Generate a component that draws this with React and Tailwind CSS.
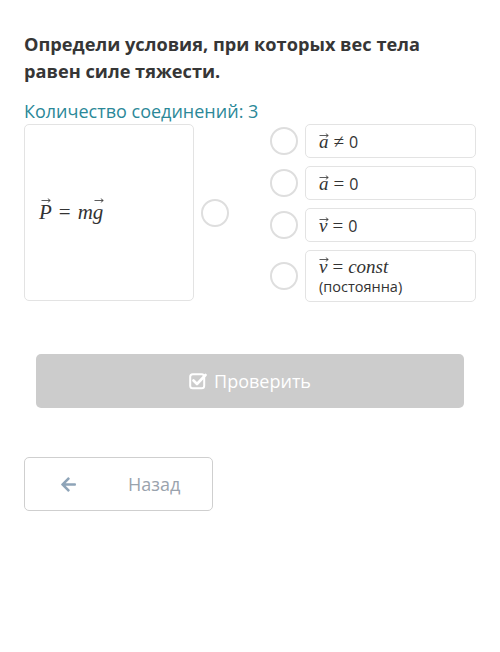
import { FaArrowLeft } from 'react-icons/fa'

const serif = "font-['Liberation_Serif','DejaVu_Serif',serif]"

function Vec({ children }) {
  return (
    <span className="relative inline-block italic">
      {children}
      <svg
        className="absolute left-[55%] -translate-x-1/2 top-[1px]"
        width="10"
        height="5"
        viewBox="0 0 10 5"
      >
        <path d="M0.5 2.5H9M6.8 0.6L9.3 2.5L6.8 4.4" stroke="#333" strokeWidth="0.8" fill="none" />
      </svg>
    </span>
  )
}

function Radio() {
  return <span className="block w-[28px] h-[28px] rounded-full border-2 border-[#dedede] bg-white shrink-0" />
}

function Option({ children, tall }) {
  return (
    <div className="flex items-center">
      <div className="w-[35px] flex justify-start">
        <Radio />
      </div>
      <div
        className={`w-[171px] ${tall ? 'h-[52px]' : 'h-[34px]'} border border-[#e3e3e3] rounded-[5px] pl-[13px] flex flex-col justify-center text-[#333]`}
      >
        {children}
      </div>
    </div>
  )
}

function CheckIcon() {
  return (
    <svg width="18" height="18" viewBox="0 0 18 18" fill="none">
      <rect x="1.2" y="2.2" width="14" height="14" rx="2.5" stroke="white" strokeWidth="2" />
      <path d="M4.5 8.5L8 12L16.5 3" stroke="white" strokeWidth="2.6" strokeLinecap="round" strokeLinejoin="round" />
    </svg>
  )
}

export default function App() {
  return (
    <div className="w-[500px] h-[652px] bg-white font-['Open_Sans',sans-serif] px-[24px] pt-[31px]">
      <h1 className="text-[18.2px] leading-[27px] font-bold text-[#363636]">
        Определи условия, при которых вес тела равен силе тяжести.
      </h1>

      <p className="mt-[13px] text-[18px] leading-[26px] text-[#2b8898]">Количество соединений: 3</p>

      <div className="mt-[0px] flex">
        <div className="w-[171px] h-[177px] border border-[#e3e3e3] rounded-[5px] flex items-center pl-[14px]">
          <span className={`${serif} text-[21px] text-[#333]`}>
            <Vec>P</Vec>
            <span className="mx-[7px] not-italic">=</span>
            <span className="italic">m</span>
            <Vec>g</Vec>
          </span>
        </div>

        <div className="ml-[7px] flex items-center">
          <Radio />
        </div>

        <div className="ml-[41px] flex flex-col gap-[8px]">
          <Option>
            <span className="text-[16px] leading-none">
              <span className={`${serif} text-[19px]`}>
                <Vec>a</Vec>
                <span className="mx-[5px] not-italic">≠</span>
              </span>
              0
            </span>
          </Option>
          <Option>
            <span className="text-[16px] leading-none">
              <span className={`${serif} text-[19px]`}>
                <Vec>a</Vec>
                <span className="mx-[5px] not-italic">=</span>
              </span>
              0
            </span>
          </Option>
          <Option>
            <span className="text-[16px] leading-none">
              <span className={`${serif} text-[19px]`}>
                <Vec>v</Vec>
                <span className="mx-[5px] not-italic">=</span>
              </span>
              0
            </span>
          </Option>
          <Option tall>
            <span className={`${serif} text-[19px] leading-[21px]`}>
              <Vec>v</Vec>
              <span className="mx-[5px]">=</span>
              <span className="italic">const</span>
            </span>
            <span className="text-[14.5px] leading-[20px] text-[#333]">(постоянна)</span>
          </Option>
        </div>
      </div>

      <div className="mt-[52px] mx-[12px] h-[54px] rounded-[5px] bg-[#cccccc] flex items-center justify-center gap-[7px] text-white text-[18px]">
        <CheckIcon />
        <span>Проверить</span>
      </div>

      <div className="mt-[49px] w-[189px] h-[54px] rounded-[5px] border border-[#cfcfcf] flex items-center">
        <FaArrowLeft className="ml-[34px] w-[19px] h-[17px] text-[#8ea4b8]" />
        <span className="ml-[50px] text-[18px] text-[#9aa3ad]">Назад</span>
      </div>
    </div>
  )
}
